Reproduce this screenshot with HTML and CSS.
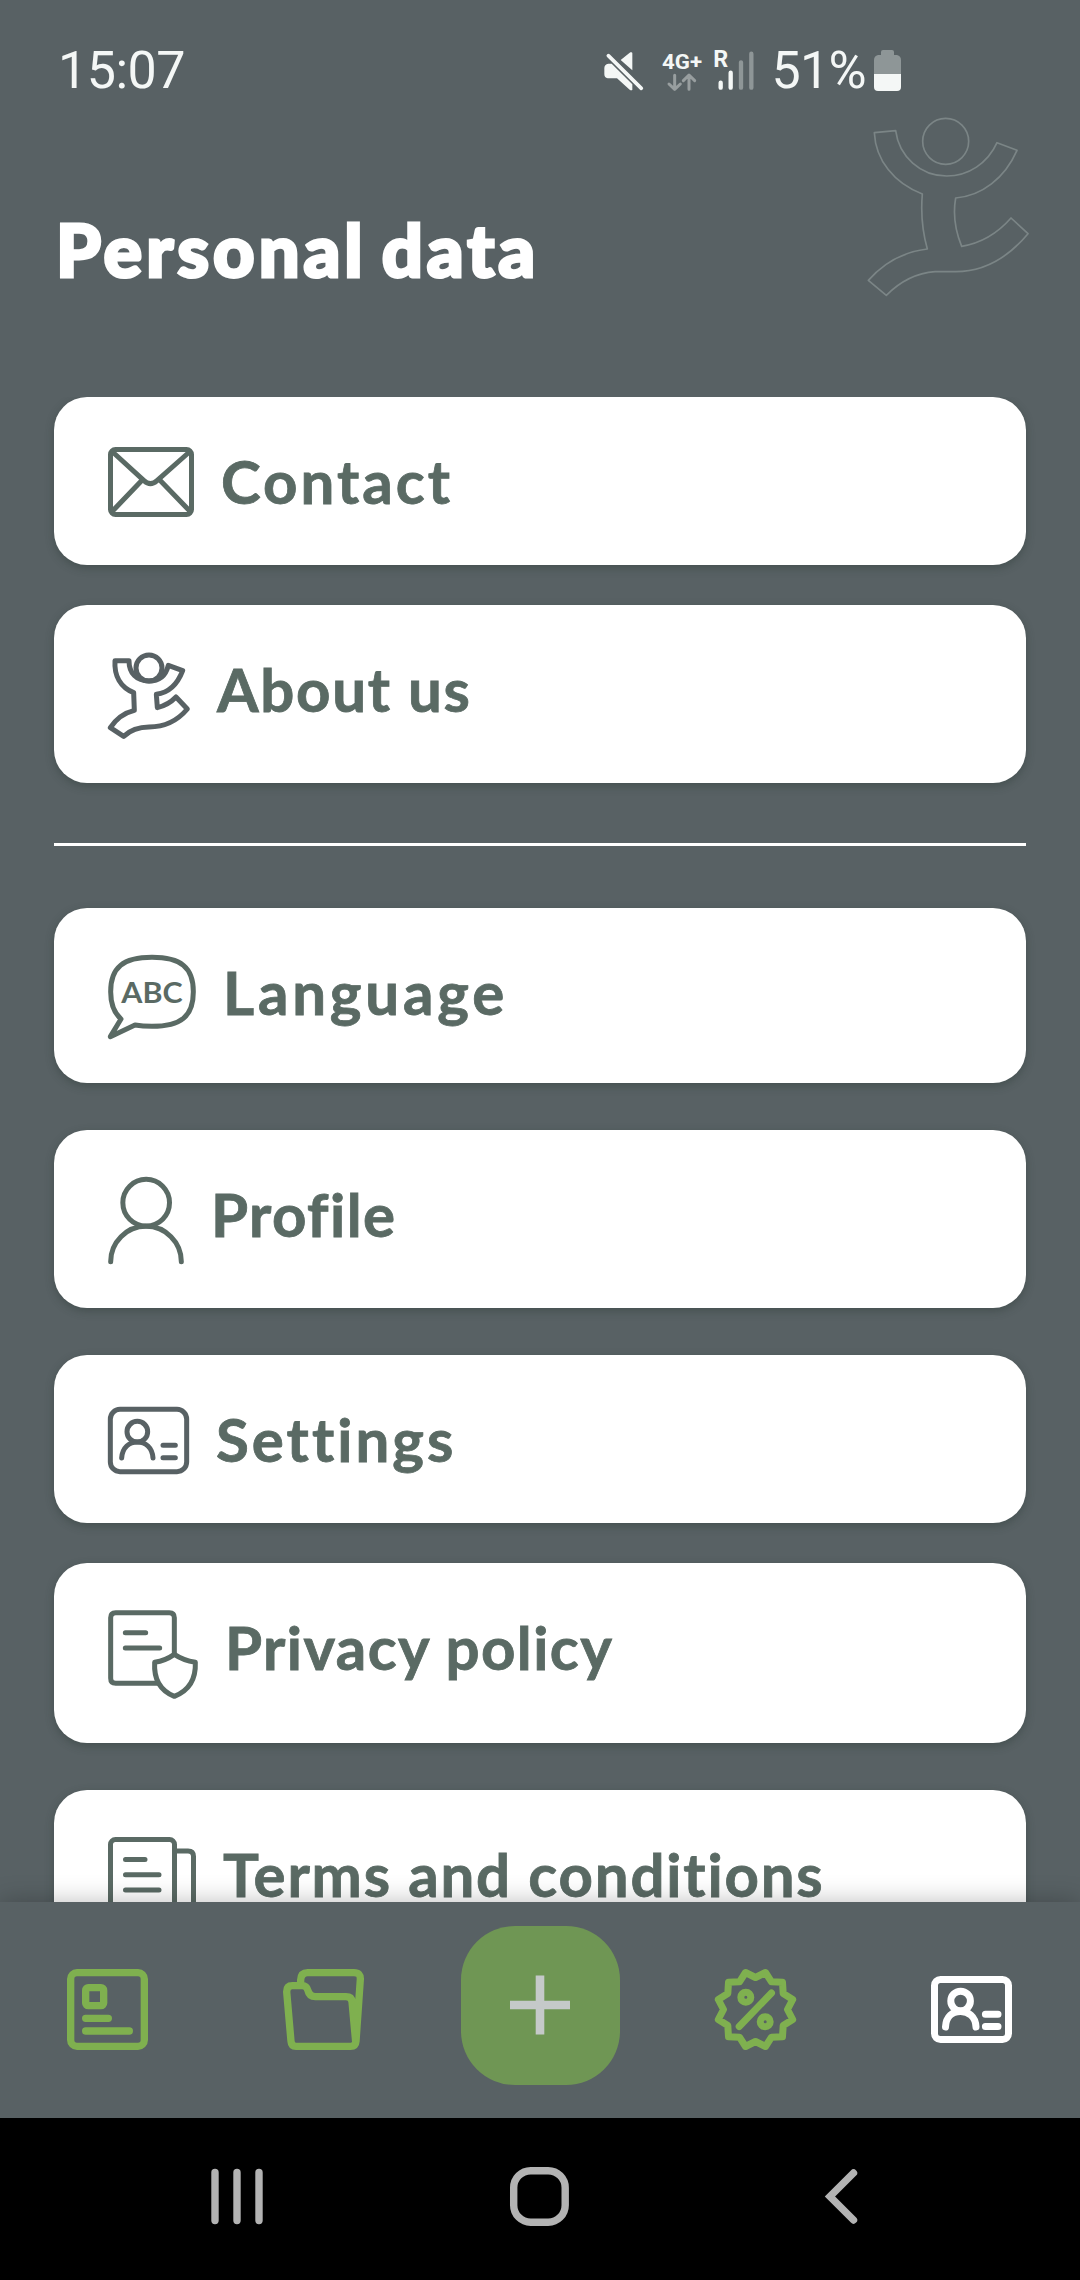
FILE: index.html
```html
<!DOCTYPE html>
<html lang="en">
<head>
<meta charset="utf-8">
<title>Personal data</title>
<link rel="stylesheet" href="styles.css">
</head>
<body>
<div class="phone">
  <div class="status">
    <span class="clock">15:07</span>
    <div class="indicators">
      <svg class="mute" width="39" height="39" viewBox="69 66 117 117">
        <path d="M119 90 L148 67 Q154 65 154 70 V121 Z M82 101 H92 L154 163 V180 Q150 182 146 179 L108 145 H80 Q70 143 70 133 V114 Q70 103 82 101 Z" fill="#f4f7f6"/>
        <path d="M82 77 L181 175" stroke="#f4f7f6" stroke-width="11" stroke-linecap="round"/>
      </svg>
      <svg class="signal" width="94" height="45" viewBox="240 51 282 135">
        <text class="net" x="243" y="116" textLength="120" lengthAdjust="spacingAndGlyphs">4G+</text>
        <text class="roam" x="397" y="111">R</text>
        <g stroke="#989e9f" stroke-width="9" stroke-linecap="round" stroke-linejoin="round" fill="none">
          <path d="M281 136 V178 M264 162 L281 178 L298 162 M324 178 V136 M307 152 L324 135 L341 152"/>
        </g>
        <g stroke-width="13" stroke-linecap="round">
          <path d="M419 158 V173 M449 128 V173" stroke="#f4f7f6"/>
          <path d="M480 97 V173 M511 71 V173" stroke="#8e9697"/>
        </g>
      </svg>
      <span class="percent">51%</span>
      <svg class="battery" width="27" height="41" viewBox="0 0 27 41">
        <path d="M7 5 V2 Q7 0 9 0 H18 Q20 0 20 2 V5 H23 Q27 6 27 10 V24 H0 V10 Q0 6 4 5 Z" fill="#8e9697"/>
        <path d="M0 24 H27 V37 Q27 41 23 41 H4 Q0 41 0 37 Z" fill="#f4f7f6"/>
      </svg>
    </div>
  </div>

  <header class="header">
    <h1 class="title">Personal data</h1>
    <svg class="mascot" width="200" height="210" viewBox="0 0 600 630" fill="none" stroke="#7b8586" stroke-width="5" stroke-linejoin="round">
      <circle cx="287" cy="124" r="69"/>
      <path d="M73 98 L137 92 C147 170 212 228 290 228 C355 228 413 190 441 128 L501 151 C464 235 395 288 317 294 C308 345 315 390 335 439 C390 430 440 403 483 354 L534 401 C474 473 400 515 317 515 H255 C200 519 150 545 109 586 L55 541 C103 487 165 455 232 447 C216 390 212 340 217 282 C132 250 77 180 73 98 Z"/>
    </svg>
  </header>

  <main class="list">
    <div class="card contact">
      <svg class="icon" width="86" height="70" viewBox="204 201 258 210">
        <rect x="211.5" y="208.5" width="243" height="195" rx="15"/>
        <path d="M218 216 L312 302 Q331 320 351 302 L448 216 M306 301 L217 394 M360 301 L450 394"/>
      </svg>
      <span class="label">Contact</span>
    </div>
    <div class="card about">
      <svg class="icon slate" width="82" height="87" viewBox="204 816 246 261">
        <circle cx="327" cy="864" r="39"/>
        <path d="M225 842 H267 C267 880 290 903 327 903 C360 903 378 884 385 856 L428 872 C412 914 388 938 349 943 L352 983 Q385 975 408 951 L442 987 C410 1025 372 1041 327 1041 C290 1041 270 1051 251 1069 L211 1043 Q238 1002 283 991 L281 938 C242 922 222 888 225 842 Z"/>
      </svg>
      <span class="label">About us</span>
    </div>

    <hr class="divider">

    <div class="card language">
      <svg class="icon" width="88" height="84" viewBox="204 195 264 252">
        <path d="M336 202 C422 202 460 232 460 305 C460 380 422 409 336 409 Q308 409 285 405 L211 440 L243 387 C221 367 212 342 212 305 C212 232 250 202 336 202 Z"/>
        <text class="abc" x="244" y="338" textLength="184" lengthAdjust="spacingAndGlyphs">ABC</text>
      </svg>
      <span class="label">Language</span>
    </div>
    <div class="card profile">
      <svg class="icon" width="76" height="87" viewBox="204 861 228 261">
        <circle cx="318.5" cy="938" r="70"/>
        <path d="M212 1115 A106 106 0 0 1 424 1115"/>
      </svg>
      <span class="label">Profile</span>
    </div>
    <div class="card settings">
      <svg class="icon slate" width="81" height="67" viewBox="204 201 243 201">
        <rect x="211" y="208" width="229" height="187" rx="29"/>
        <circle cx="292" cy="275" r="31"/>
        <path d="M245 354 C247 322 268 306 292 306 C316 306 337 322 339 354 M369 316 H406 M369 353 H406"/>
      </svg>
      <span class="label">Settings</span>
    </div>
    <div class="card privacy">
      <svg class="icon" width="90" height="89" viewBox="204 810 270 267">
        <path d="M403 940 V833 Q403 818 388 818 H227 Q212 818 212 833 V1015 Q212 1030 227 1030 H352 M256 878 H317 M256 924 H359"/>
        <path d="M403 943 Q376 962 344 967 C341 1018 361 1052 403 1069 C446 1052 468 1018 466 967 Q430 961 403 943 Z"/>
      </svg>
      <span class="label">Privacy policy</span>
    </div>
    <div class="card terms">
      <svg class="icon thin" width="88" height="90" viewBox="0 0 88 90">
        <rect x="2.5" y="2.5" width="64" height="84" rx="5"/>
        <path d="M67 14 H80 Q85.5 14 85.5 19.500 V86 H67 M17.500 22.500 H37 M17.500 37.700 H51 M17.500 53 H51"/>
      </svg>
      <span class="label">Terms and conditions</span>
    </div>
  </main>

  <nav class="tabs">
    <svg class="tab" width="81" height="81" viewBox="81 207 243 243">
      <rect x="92" y="218" width="221" height="221" rx="19"/>
      <rect x="137" y="263" width="54" height="54" rx="8"/>
      <path d="M137 355 H205 M137 393 H268"/>
    </svg>
    <svg class="tab" width="81" height="81" viewBox="729 207 243 243">
      <path class="butt" d="M782 247 V240 Q783 218 803 218 H942 Q962 218 961 238 L948 424 Q947 439 932 439 H768 Q754 439 753 424 L740 275 Q740 257 757 257 H787 Q800 257 804 272 Q808 290 826 290 H918 Q935 290 936 305 L947 425"/>
    </svg>
    <div class="fab">
      <svg width="60" height="60" viewBox="0 0 60 60"><path d="M30 .5 V59.500 M0 30 H60" stroke="#c5c9c9" stroke-width="8.600"/></svg>
    </div>
    <svg class="tab promo" width="81" height="81" viewBox="-40.500 -40.500 81 81">
      <path d="M10 -37 L0 -32 L-10 -37 L-16 -27.700 L-27 -27.200 L-27.700 -16 L-37.200 -10 L-32 0 L-37.200 10 L-27.700 16 L-27 27.200 L-16 27.700 L-10 37 L0 32 L10 37 L16 27.700 L27 27.200 L27.700 16 L37.200 10 L32 0 L37.200 -10 L27.700 -16 L27 -27.200 L16 -27.700 Z"/>
      <circle cx="-9.700" cy="-12.200" r="5"/>
      <circle cx="9.700" cy="12.200" r="5"/>
      <path d="M16 -16.500 L-16.300 17"/>
    </svg>
    <svg class="tab active" width="81" height="67" viewBox="0 0 81 67">
      <rect x="3.500" y="3.500" width="74" height="60" rx="6"/>
      <circle cx="29.600" cy="25" r="9.800"/>
      <path d="M14.500 51 C15 40 22 35.500 29.600 35.500 C37 35.500 44.500 40 45 51 M54.400 38.300 H67 M54.400 50.500 H67"/>
    </svg>
  </nav>

  <div class="sysnav">
    <svg width="52" height="55" viewBox="0 0 52 55"><path d="M4 3.500 V51.500 M26 3.500 V51.500 M48 3.500 V51.500"/></svg>
    <svg class="home" width="59" height="59" viewBox="0 0 59 59"><rect x="3.700" y="3.700" width="51.500" height="51.500" rx="17"/></svg>
    <svg width="33" height="55" viewBox="0 0 33 55"><path d="M28.500 4 L5 27.500 L28.500 51"/></svg>
  </div>
</div>
</body>
</html>
```
FILE: styles.css
```css
* { box-sizing: border-box; }

body {
  margin: 0;
  background: #586164;
  font-family: Lato, "Open Sans", sans-serif;
}

.phone {
  width: 1080px;
  height: 2280px;
  display: flex;
  flex-direction: column;
  overflow: hidden;
  background: #586164;
}

svg { display: block; flex: none; overflow: visible; }

/* Status bar */
.status {
  height: 140px;
  flex: none;
  padding: 40px 179px 0 58px;
  display: flex;
  justify-content: space-between;
  align-items: flex-start;
  font-family: Roboto, sans-serif;
  font-size: 52px;
  line-height: 61px;
  color: #f4f7f6;
}
.clock { letter-spacing: -.5px; }
.indicators { display: flex; }
.mute { margin-top: 12px; }
.signal { margin: 7px 17px 0 18px; }
.battery { margin: 10px 0 0 8px; }
.percent { letter-spacing: -.7px; }
.net, .roam { font-weight: 700; fill: #f4f7f6; }
.net { font-size: 62px; }
.roam { font-size: 70px; }

/* Heading */
.header {
  position: relative;
  height: 257px;
  flex: none;
  padding: 65px 54px 0 56px;
}
.title {
  margin: 0;
  font-size: 72px;
  line-height: 88px;
  font-weight: 900;
  letter-spacing: 4px;
  word-spacing: -6px;
  color: #fff;
  -webkit-text-stroke: 3px #fff;
}
.mascot { position: absolute; left: 850px; top: -40px; }

/* Menu cards */
.list {
  height: 1505px;
  flex: none;
  padding: 0 54px;
  overflow: hidden;
}
.card {
  display: flex;
  align-items: flex-start;
  gap: 27px;
  padding: 47px 54px 0;
  background: #fff;
  border-radius: 33px;
  box-shadow: 0 3px 8px rgba(40, 55, 50, .4);
}
.label {
  font-size: 60px;
  line-height: 74px;
  font-weight: 700;
  color: #5a6a64;
  white-space: nowrap;
  -webkit-text-stroke: .8px #5a6a64;
}
.icon {
  fill: none;
  stroke: #5a6a64;
  stroke-width: 15px;
  stroke-linecap: round;
  stroke-linejoin: round;
}
.icon.slate { stroke: #586164; }
.icon.thin { stroke-width: 5px; }
.abc { font-size: 88px; font-weight: 700; fill: #5a6a64; stroke: none; }
.contact { height: 168px; margin-bottom: 40px; letter-spacing: 3px; }
.contact .icon { margin-top: 3px; }
.about { height: 178px; letter-spacing: 1.7px; }
.divider {
  height: 3px;
  margin: 60px 0 62px;
  border: 0;
  background: #fff;
}
.language { height: 175px; margin-bottom: 47px; letter-spacing: 3.8px; }
.language .icon { letter-spacing: 0; }
.profile { height: 178px; margin-bottom: 47px; letter-spacing: 1.4px; }
.settings { height: 168px; margin-bottom: 40px; letter-spacing: 3px; }
.settings .icon { margin-top: 5px; }
.privacy { height: 180px; margin-bottom: 47px; letter-spacing: 1.4px; }
.terms { height: 180px; letter-spacing: 1.8px; }

/* Bottom tab bar */
.tabs {
  position: relative;
  height: 216px;
  flex: none;
  display: grid;
  grid-template-columns: repeat(5, 1fr);
  justify-items: center;
  align-items: center;
  padding-bottom: 1px;
  background: #586164;
  box-shadow: 0 0 24px rgba(0, 0, 0, .26);
}
.tab {
  margin-right: 1px;
  fill: none;
  stroke: #7fb04f;
  stroke-width: 22px;
  stroke-linecap: round;
  stroke-linejoin: round;
}
.tab .butt { stroke-linecap: butt; }
.promo { stroke-width: 7px; }
.active { stroke: #fff; stroke-width: 7px; }
.fab {
  width: 159px;
  height: 159px;
  margin-bottom: 9px;
  border-radius: 54px;
  display: flex;
  align-items: center;
  justify-content: center;
  background: #6f9654;
}

/* System navigation */
.sysnav {
  height: 162px;
  flex: none;
  display: flex;
  justify-content: space-between;
  align-items: center;
  padding: 0 222px 6px 211px;
  background: #000;
}
.sysnav svg {
  fill: none;
  stroke: #b3b3b3;
  stroke-width: 7.4px;
  stroke-linecap: round;
}
.sysnav .home { margin-right: 9px; }
```
